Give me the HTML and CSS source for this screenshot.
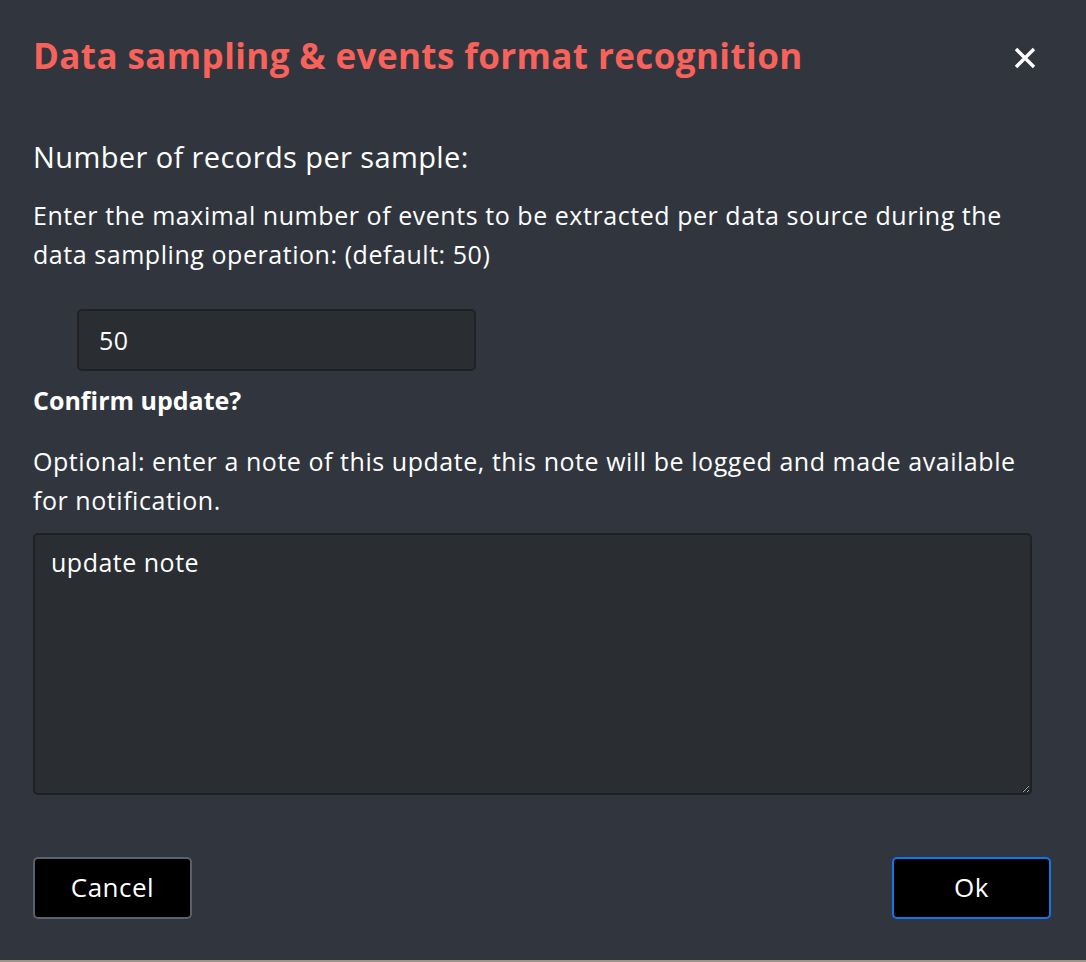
FILE: index.html
```html
<!DOCTYPE html>
<html>
<head>
<meta charset="utf-8">
<link rel="stylesheet" href="styles.css">
</head>
<body>
<div class="modal">
  <div class="header">
    <h1 class="title">Data sampling &amp; events format recognition</h1>
    <button class="close" aria-label="Close">
      <svg width="24" height="24" viewBox="0 0 24 24"><path d="M3 3 L21 21 M21 3 L3 21" stroke="#fff" stroke-width="3.4" stroke-linecap="butt"/></svg>
    </button>
  </div>
  <div class="body">
    <h2 class="subtitle">Number of records per sample:</h2>
    <p class="text">Enter the maximal number of events to be extracted per data source during the data sampling operation: (default: 50)</p>
    <div class="input-row"><input class="input" type="text" value="50"></div>
    <div class="confirm">Confirm update?</div>
    <p class="text">Optional: enter a note of this update, this note will be logged and made available for notification.</p>
    <textarea class="note">update note</textarea>
  </div>
  <div class="footer">
    <button class="btn cancel">Cancel</button>
    <button class="btn ok">Ok</button>
  </div>
</div>
<div class="strip"></div>
</body>
</html>
```
FILE: styles.css
```css
html, body { margin: 0; padding: 0; }
body {
  background: #31363e;
  width: 1086px;
  height: 962px;
  overflow: hidden;
  font-family: "Open Sans", "Liberation Sans", sans-serif;
  color: #ffffff;
  position: relative;
}
.modal {
  display: flex;
  flex-direction: column;
  height: 960px;
}
.header {
  display: flex;
  justify-content: space-between;
  align-items: flex-start;
  padding: 31px 49px 0 33px;
}
.title {
  margin: 0;
  font-size: 35px;
  line-height: 50px;
  font-weight: 700;
  color: #f8625b;
  letter-spacing: 0.4px;
}
.close {
  background: none;
  border: none;
  padding: 0;
  width: 24px;
  height: 24px;
  display: block;
  margin-top: 15px;
}
.close svg { display: block; }
.body {
  padding: 56px 55px 0 33px;
}
.subtitle {
  margin: 0 0 19px;
  font-size: 29px;
  font-weight: 400;
  line-height: 40px;
  letter-spacing: 0.4px;
}
.text {
  margin: 0;
  font-size: 25px;
  line-height: 39px;
  letter-spacing: 0.55px;
}
.input-row {
  padding: 35px 0 0 44px;
}
.input {
  display: block;
  box-sizing: border-box;
  width: 399px;
  height: 62px;
  background: #2a2d31;
  border: 2px solid #1f2125;
  border-radius: 5px;
  color: #fff;
  font-family: inherit;
  font-size: 25px;
  letter-spacing: 0.5px;
  padding: 0 20px;
  outline: none;
}
.confirm {
  font-size: 25px;
  font-weight: 700;
  margin: 14px 0 27px;
  line-height: 30px;
}
.note {
  display: block;
  box-sizing: border-box;
  margin-top: 13px;
  width: 999px;
  height: 262px;
  background: #2a2d31;
  border: 2px solid #1f2125;
  border-radius: 5px;
  color: #fff;
  font-family: inherit;
  font-size: 25px;
  letter-spacing: 0.5px;
  line-height: 30px;
  padding: 12px 16px;
  resize: both;
  outline: none;
}
.footer {
  display: flex;
  justify-content: space-between;
  padding: 62px 35px 0 33px;
}
.btn {
  box-sizing: border-box;
  width: 159px;
  height: 62px;
  background: #000;
  color: #fff;
  font-family: inherit;
  font-size: 26px;
  letter-spacing: 0.5px;
  line-height: 1;
  padding: 0 0 3px;
  border-radius: 5px;
}
.cancel { border: 2px solid #59616b; }
.ok { border: 2px solid #0b78f0; }
.strip {
  position: absolute;
  left: 0;
  bottom: 0;
  width: 100%;
  height: 2px;
  background: #9c9484;
}
```
